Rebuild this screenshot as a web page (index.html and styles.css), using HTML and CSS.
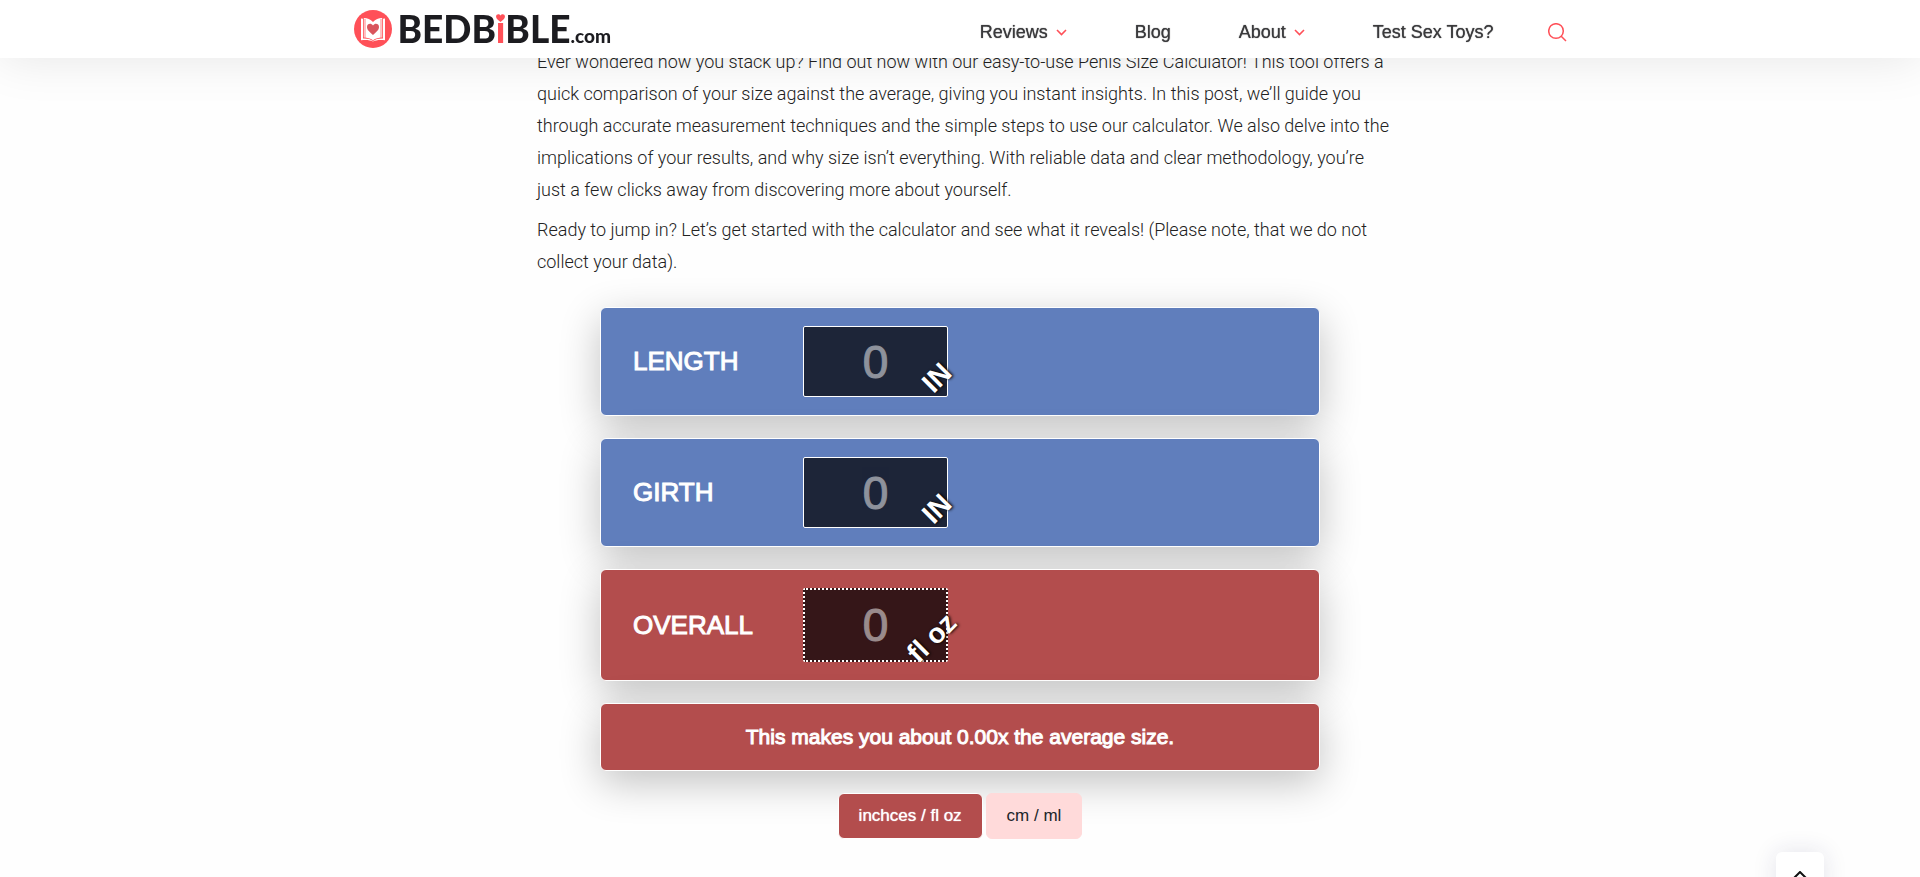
FILE: index.html
```html
<!DOCTYPE html>
<html lang="en">
<head>
<meta charset="UTF-8"><meta name="viewport" content="width=device-width, initial-scale=1">
<title>Penis Size Calculator - Bedbible.com</title>
<link rel="stylesheet" href="styles.css">
</head>
<body>
  <header class="header">
    <div class="header-inner">
      <a class="logo" href="#">
        <svg class="logo-mark" viewBox="0 0 38 38" width="38" height="38" aria-hidden="true">
          <circle cx="19" cy="19" r="19" fill="#ff5058"/>
          <path d="M7 8.500L9 8.800V28.500C13 28.300 16.500 29 19 31C21.500 29 25 28.300 29 28.500V8.800L31 8.500V30.300C26 29.600 22 30 19 31.500C16 30 12 29.600 7 30.300Z" fill="#fff"/>
          <path d="M9.800 8C13.500 8.300 16.500 9.300 19 12C21.500 9.300 24.500 8.300 28.200 8V27.500C24.500 27.500 21.500 28.300 19 30.200C16.500 28.300 13.500 27.500 9.800 27.500Z" fill="#fff"/>
          <path d="M11 9V28M27 9V28" stroke="#ff5058" stroke-width=".7"/>
          <path d="M19 25C16 22.300 13 20 13 17C13 13.700 17 12.600 19 15.500C21 12.600 25 13.700 25 17C25 20 22 22.300 19 25Z" fill="#d9545c"/>
        </svg>
        <span class="logo-text">BEDB<span class="logo-i">ı<svg class="logo-heart" viewBox="0 0 10 9" width="9" height="8" aria-hidden="true"><path d="M5 9C2 6.500 0 5 0 2.700C0-.2 3.800-.8 5 1.800C6.200-.8 10-.2 10 2.700C10 5 8 6.500 5 9Z" fill="#ff5058"/></svg></span>BLE</span><span class="logo-com">.com</span>
      </a>
      <nav class="nav">
        <a href="#">Reviews <svg class="chevron" viewBox="0 0 11 7" width="11" height="7"><path d="M1 1L5.500 5.500L10 1"/></svg></a>
        <a href="#">Blog</a>
        <a href="#">About <svg class="chevron" viewBox="0 0 11 7" width="11" height="7"><path d="M1 1L5.500 5.500L10 1"/></svg></a>
        <a href="#">Test Sex Toys?</a>
      </nav>
      <button class="search" type="button" aria-label="Search">
        <svg viewBox="0 0 19 19" width="19" height="19"><circle cx="8" cy="8" r="7.300"/><path d="M13 13L18 18"/></svg>
      </button>
    </div>
  </header>

  <main class="content">
    <p>Ever wondered how you stack up? Find out now with our easy-to-use Penis Size Calculator! This tool offers a<br>
      quick comparison of your size against the average, giving you instant insights. In this post, we’ll guide you<br>
      through accurate measurement techniques and the simple steps to use our calculator. We also delve into the<br>
      implications of your results, and why size isn’t everything. With reliable data and clear methodology, you’re<br>
      just a few clicks away from discovering more about yourself.</p>
    <p>Ready to jump in? Let’s get started with the calculator and see what it reveals! (Please note, that we do not<br>
      collect your data).</p>

    <form class="calc">
      <div class="card">
        <label for="length">LENGTH</label>
        <div class="field"><input id="length" type="text" placeholder="0"><span class="unit">IN</span></div>
      </div>
      <div class="card">
        <label for="girth">GIRTH</label>
        <div class="field"><input id="girth" type="text" placeholder="0"><span class="unit">IN</span></div>
      </div>
      <div class="card red">
        <label for="overall">OVERALL</label>
        <div class="field clipped"><input id="overall" class="dotted" type="text" placeholder="0" readonly><span class="unit unit-long">fl oz</span></div>
      </div>
      <div class="card red result">This makes you about 0.00x the average size.</div>
      <div class="units">
        <button class="btn active" type="button">inchces / fl oz</button>
        <button class="btn" type="button">cm / ml</button>
      </div>
    </form>
  </main>

  <button class="to-top" type="button" aria-label="Back to top">
    <svg viewBox="0 0 16 9" width="16" height="9"><path d="M1 8L8 1L15 8"/></svg>
  </button>
</body>
</html>
```
FILE: styles.css
```css
*{box-sizing:border-box}
body{margin:0;background:#fefefe;color:#222;font-family:"Liberation Sans",Arial,sans-serif}
a{color:inherit;text-decoration:none}
button{font-family:inherit;cursor:pointer}

.header{position:fixed;top:0;left:0;right:0;z-index:10;height:58px;background:#fff;box-shadow:0 0 50px rgba(0,0,0,.1)}
.header-inner{display:flex;align-items:center;max-width:1213px;height:58px;margin:0 auto}
.logo{display:flex;align-items:baseline;margin-right:auto;color:#1c1c20;font-family:Lato,sans-serif;font-weight:900}
.logo-mark{align-self:center;margin-right:6px}
.logo-text{font-size:37px;line-height:46px}
.logo-i{position:relative;color:#ff5058}
.logo-heart{position:absolute;left:0;top:8px}
.logo-com{font-size:19px}

.nav{display:flex;gap:68px;padding-top:6px;color:#3a3a3c;font-size:18px;line-height:24px}
.nav a{display:flex;align-items:center;gap:8px;text-shadow:0 0 1px #3a3a3c}
.chevron,.search svg,.to-top svg{fill:none;stroke:#ff5058;stroke-width:2}
.chevron{stroke-width:1.600}
.search{display:flex;margin-left:54px;padding:6px 0 0;border:0;background:none}
.search svg{stroke-width:1.500}

.content{max-width:846px;margin:0 auto;padding-top:46px}
.content p{margin:0 0 8px;font-family:Roboto,sans-serif;font-weight:300;font-size:18px;line-height:32px;white-space:nowrap}

.calc{display:flex;flex-direction:column;gap:22px;max-width:720px;margin:29px auto 0}
.card{display:flex;align-items:center;padding:18px 32px;border:1px solid #fff;border-radius:6px;background:#607ebc;color:#fff;box-shadow:0 12px 40px rgba(0,0,0,.24)}
.card.red{background:#b34d4d}
.card label{width:170px;font-size:26px;-webkit-text-stroke:1px #fff}
.field{position:relative}
.field.clipped{overflow-y:clip;overflow-x:visible}
.field input{display:block;width:145px;height:71px;padding:0;border:1px solid #fff;border-radius:2px;background:#1d2538;color:#fff;font-family:inherit;font-size:46px;text-align:center}
.field input.dotted{height:74px;border:2px dotted #fff;background:#351618}
.field input::placeholder{color:#fff;opacity:.5;-webkit-text-stroke:1px #fff}
.unit{position:absolute;right:-3px;bottom:4px;font-size:28px;line-height:30px;font-weight:bold;text-shadow:1px 1px 3px #000;transform:rotate(-45deg)}
.unit-long{right:-12px;bottom:9px}
.card.result{justify-content:center;font-size:21px;line-height:30px;-webkit-text-stroke:1px #fff}
.units{display:flex;justify-content:center;gap:3px}
.btn{height:46px;padding:0 20px;border:1px solid #ffdada;border-radius:6px;background:#ffdada;color:#212529;font-size:17px}
.btn.active{border-color:#fff;background:#b34d4d;color:#fff;text-shadow:0 0 1px #fff}

.to-top{position:fixed;right:96px;bottom:-21px;width:48px;height:46px;border:0;border-radius:6px;background:#fff;box-shadow:0 0 25px rgba(30,30,90,.12)}
.to-top svg{stroke:#111}
```
